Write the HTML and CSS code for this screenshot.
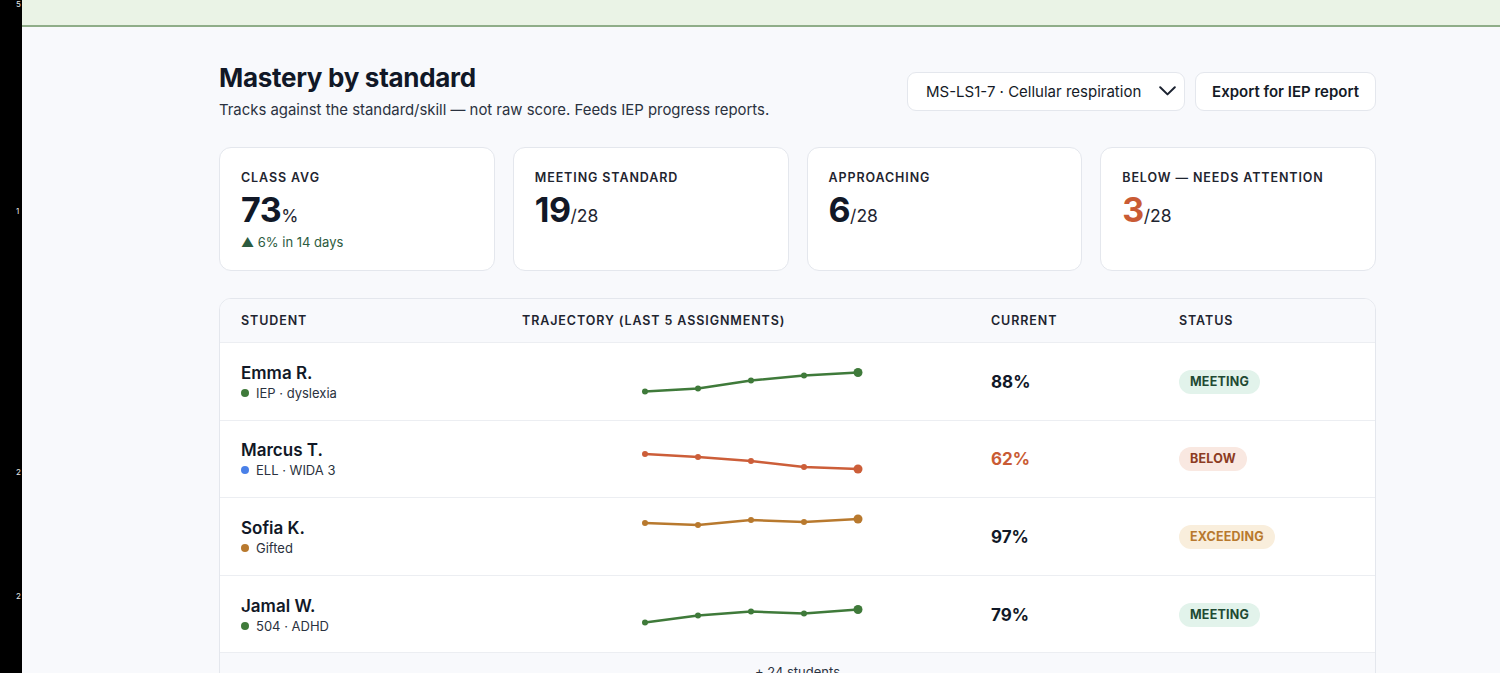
FILE: index.html
```html
<!DOCTYPE html>
<html lang="en">
<head>
	<meta charset="UTF-8">
	<title>Mastery by standard</title>
	<link rel="stylesheet" href="styles.css">
</head>
<body>
	<div class="screen">
		<div class="gutter">
			<span class="gn gn-1">5</span>
			<span class="gn gn-2">1</span>
			<span class="gn gn-3">2</span>
			<span class="gn gn-4">2</span>
		</div>
		<div class="main">
			<div class="topbar"></div>
			<div class="page">
				<header class="head">
					<div>
						<h1>Mastery by standard</h1>
						<p class="sub">Tracks against the standard/skill — not raw score. Feeds IEP progress reports.</p>
					</div>
					<div class="actions">
						<button class="select">
							<span>MS-LS1-7 · Cellular respiration</span>
							<svg width="17" height="10" viewBox="0 0 17 10"><path d="M1.2 1.2L8.5 8.4L15.8 1.2" fill="none" stroke="#1b2230" stroke-width="2" stroke-linecap="round" stroke-linejoin="round"/></svg>
						</button>
						<button class="btn">Export for IEP report</button>
					</div>
				</header>

				<section class="stats">
					<div class="stat">
						<div class="label">Class avg</div>
						<div class="num">73<small>%</small></div>
						<div class="delta">▲ 6% in 14 days</div>
					</div>
					<div class="stat">
						<div class="label">Meeting standard</div>
						<div class="num">19<small>/28</small></div>
					</div>
					<div class="stat">
						<div class="label">Approaching</div>
						<div class="num">6<small>/28</small></div>
					</div>
					<div class="stat">
						<div class="label">Below — needs attention</div>
						<div class="num"><span class="warn">3</span><small>/28</small></div>
					</div>
				</section>

				<section class="table">
					<div class="row thead">
						<div>Student</div>
						<div>Trajectory (last 5 assignments)</div>
						<div>Current</div>
						<div>Status</div>
					</div>

					<div class="row">
						<div class="who">
							<div class="name">Emma R.</div>
							<div class="tag"><i class="dot green"></i>IEP · dyslexia</div>
						</div>
						<div class="traj">
							<svg width="226" height="44" viewBox="0 0 226 44" class="spark green-s">
								<polyline points="6,32.5 59,29.5 112,21.5 165,16.5 219,13.5"/>
								<circle cx="6" cy="32.5" r="3"/><circle cx="59" cy="29.5" r="3"/><circle cx="112" cy="21.5" r="3"/><circle cx="165" cy="16.5" r="3"/><circle cx="219" cy="13.5" r="4.5"/>
							</svg>
						</div>
						<div class="pct">88%</div>
						<div><span class="badge meeting">Meeting</span></div>
					</div>

					<div class="row">
						<div class="who">
							<div class="name">Marcus T.</div>
							<div class="tag"><i class="dot blue"></i>ELL · WIDA 3</div>
						</div>
						<div class="traj">
							<svg width="226" height="44" viewBox="0 0 226 44" class="spark red-s">
								<polyline points="6,17 59,20 112,24 165,30 219,32"/>
								<circle cx="6" cy="17" r="3"/><circle cx="59" cy="20" r="3"/><circle cx="112" cy="24" r="3"/><circle cx="165" cy="30" r="3"/><circle cx="219" cy="32" r="4.5"/>
							</svg>
						</div>
						<div class="pct warn">62%</div>
						<div><span class="badge below">Below</span></div>
					</div>

					<div class="row">
						<div class="who">
							<div class="name">Sofia K.</div>
							<div class="tag"><i class="dot amber"></i>Gifted</div>
						</div>
						<div class="traj">
							<svg width="226" height="44" viewBox="0 0 226 44" class="spark amber-s">
								<polyline points="6,9 59,11 112,6 165,8 219,5"/>
								<circle cx="6" cy="9" r="3"/><circle cx="59" cy="11" r="3"/><circle cx="112" cy="6" r="3"/><circle cx="165" cy="8" r="3"/><circle cx="219" cy="5" r="4.5"/>
							</svg>
						</div>
						<div class="pct">97%</div>
						<div><span class="badge exceeding">Exceeding</span></div>
					</div>

					<div class="row">
						<div class="who">
							<div class="name">Jamal W.</div>
							<div class="tag"><i class="dot green"></i>504 · ADHD</div>
						</div>
						<div class="traj">
							<svg width="226" height="44" viewBox="0 0 226 44" class="spark green-s">
								<polyline points="6,30.5 59,23.5 112,19.5 165,21.5 219,17.5"/>
								<circle cx="6" cy="30.5" r="3"/><circle cx="59" cy="23.5" r="3"/><circle cx="112" cy="19.5" r="3"/><circle cx="165" cy="21.5" r="3"/><circle cx="219" cy="17.5" r="4.5"/>
							</svg>
						</div>
						<div class="pct">79%</div>
						<div><span class="badge meeting">Meeting</span></div>
					</div>

					<div class="more">+ 24 students</div>
				</section>
			</div>
		</div>
	</div>
</body>
</html>
```

FILE: styles.css
```css
html,body{
	margin: 0;
	padding: 0;
	height: 100%;
	overflow: hidden;
}
body{
	font-family: Inter, "Noto Sans", "Liberation Sans", sans-serif;
	color: #141a26;
	background: #000;
}
.screen{
	display: flex;
	height: 673px;
}

/* line-number gutter */
.gutter{
	width: 22px;
	flex: none;
	background: #000;
	overflow: hidden;
	display: flex;
	flex-direction: column;
}
.gn{
	display: block;
	color: #e8e8e8;
	font-size: 8px;
	line-height: 9px;
	padding-left: 16px;
}
.gn-1{margin-top: 0;}
.gn-2{margin-top: 198px;}
.gn-3{margin-top: 252px;}
.gn-4{margin-top: 115px;}

.main{
	flex: 1;
	background: #f8f9fc;
	overflow: hidden;
}
.topbar{
	height: 25px;
	background: #eaf3e6;
	border-bottom: 2px solid #8fad89;
}
.page{
	width: 1157px;
	margin-left: 197px;
	padding-top: 34px;
}

/* header */
.head{
	display: flex;
	justify-content: space-between;
	align-items: center;
}
h1{
	margin: 0;
	font-size: 26px;
	line-height: 34px;
	font-weight: 700;
	letter-spacing: -0.3px;
	color: #111827;
}
.sub{
	margin: 4px 0 0;
	font-size: 14.9px;
	line-height: 22px;
	color: #2b3240;
}
.actions{
	display: flex;
	gap: 10px;
}
.select,.btn{
	height: 39px;
	background: #fff;
	border: 1px solid #e4e7ed;
	border-radius: 9px;
	font-family: inherit;
	font-size: 15px;
	color: #141a26;
	padding: 0 16px;
	white-space: nowrap;
}
.select{
	width: 278px;
	display: flex;
	align-items: center;
	justify-content: space-between;
	padding: 0 8px 0 18px;
}
.btn{
	font-weight: 600;
}

/* stat cards */
.stats{
	display: grid;
	grid-template-columns: repeat(4, 1fr);
	gap: 18px;
	margin-top: 26px;
}
.stat{
	height: 124px;
	box-sizing: border-box;
	background: #fff;
	border: 1px solid #e4e7ed;
	border-radius: 12px;
	padding: 22px 21px 0;
}
.label{
	font-size: 12.5px;
	line-height: 16px;
	font-weight: 600;
	letter-spacing: 0.9px;
	text-transform: uppercase;
	color: #1f2530;
}
.num{
	margin-top: 4px;
	font-size: 34px;
	line-height: 40px;
	font-weight: 700;
	letter-spacing: -0.5px;
	color: #111827;
}
.num small{
	font-size: 17.5px;
	font-weight: 400;
	letter-spacing: 0;
	color: #1f2530;
}
.warn{color: #c95b34;}
.delta{
	margin-top: -3px;
	font-size: 13px;
	line-height: 18px;
	color: #2c5b40;
}

/* table */
.table{
	margin-top: 27px;
	background: #fff;
	border: 1px solid #e4e7ed;
	border-radius: 12px;
	overflow: hidden;
}
.row{
	display: grid;
	grid-template-columns: 281px 469px 188px 1fr;
	align-items: center;
	box-sizing: border-box;
	padding: 1px 21px 0;
	height: 77.6px;
	border-top: 1px solid #eceef2;
}
.row.thead{
	height: 43px;
	padding-top: 0;
	border-top: 0;
	background: #f8f9fc;
	font-size: 12.5px;
	font-weight: 600;
	letter-spacing: 0.9px;
	text-transform: uppercase;
	color: #1f2530;
}
.name{
	font-size: 17px;
	line-height: 22px;
	font-weight: 600;
	color: #111827;
}
.tag{
	display: flex;
	align-items: center;
	gap: 7px;
	font-size: 13px;
	line-height: 18px;
	color: #2b3240;
}
.dot{
	width: 8px;
	height: 8px;
	border-radius: 50%;
}
.dot.green{background: #3f7a3a;}
.dot.blue{background: #4a80e8;}
.dot.amber{background: #b8792e;}

.traj svg{
	display: block;
	margin-left: 117px;
	margin-top: -1px;
}
.spark polyline{
	fill: none;
	stroke-width: 2.5;
	stroke-linejoin: round;
	stroke-linecap: round;
}
.green-s polyline{stroke: #3f7a3a;}
.green-s circle{fill: #3f7a3a;}
.red-s polyline{stroke: #cc5e39;}
.red-s circle{fill: #cc5e39;}
.amber-s polyline{stroke: #b8792e;}
.amber-s circle{fill: #b8792e;}

.pct{
	font-size: 17px;
	font-weight: 700;
	color: #111827;
}
.pct.warn{color: #c95b34;}

.badge{
	display: inline-block;
	height: 24px;
	line-height: 24px;
	padding: 0 11px;
	border-radius: 12px;
	font-size: 12.5px;
	font-weight: 700;
	letter-spacing: 0.2px;
	text-transform: uppercase;
}
.meeting{background: #e2f3eb; color: #1f4a33;}
.below{background: #f9e8e1; color: #8c3b22;}
.exceeding{background: #f9eedc; color: #b8792e;}

.more{
	border-top: 1px solid #eceef2;
	background: #f8f9fc;
	text-align: center;
	font-size: 13px;
	line-height: 18px;
	padding-top: 10px;
	height: 40px;
	color: #2b3240;
}
```
